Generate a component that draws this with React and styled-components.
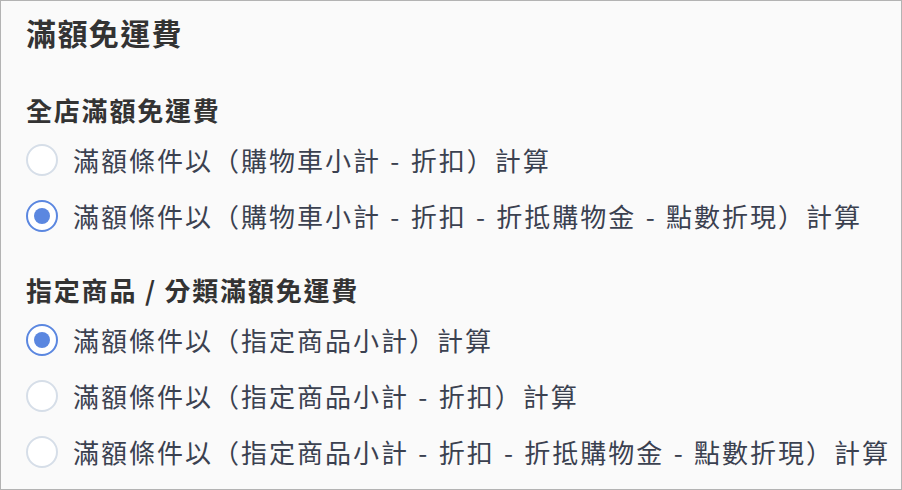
import React from "react";
import styled, { createGlobalStyle } from "styled-components";

const Global = createGlobalStyle`
  html, body { margin: 0; padding: 0; background: #fafafa; }
  * { box-sizing: border-box; }
`;

const Frame = styled.div`
  width: 902px;
  height: 490px;
  border: 1px solid #b3b3b3;
  background: #fafafa;
  padding: 11px 0 0 25px;
  font-family: "Noto Sans CJK TC", "Noto Sans", sans-serif;
  overflow: hidden;
`;

const Title = styled.h1`
  margin: 0;
  font-size: 30px;
  line-height: 40px;
  font-weight: 700;
  letter-spacing: 1.4px;
  color: #333333;
`;

const Section = styled.section`
  display: flex;
  flex-direction: column;
  margin-top: ${(p) => p.$gap}px;
`;

const SectionTitle = styled.h2`
  margin: 0 0 4px;
  font-size: 26px;
  line-height: 36px;
  font-weight: 700;
  letter-spacing: 1.8px;
  color: #333333;
`;

const Option = styled.label`
  display: flex;
  align-items: center;
  gap: 15px;
  height: 56px;
  cursor: pointer;
`;

const Radio = styled.span`
  flex: none;
  width: 32px;
  height: 32px;
  border-radius: 50%;
  border: 2.5px solid ${(p) => (p.$checked ? "#5b87e0" : "#d6dee8")};
  background: #ffffff;
  display: flex;
  align-items: center;
  justify-content: center;
  &::after {
    content: "";
    width: 16px;
    height: 16px;
    border-radius: 50%;
    background: #5b87e0;
    display: ${(p) => (p.$checked ? "block" : "none")};
  }
`;

const Label = styled.span`
  font-size: 26px;
  line-height: 36px;
  letter-spacing: 2px;
  word-spacing: 1.5px;
  color: #3b4150;
  white-space: nowrap;
`;

const sections = [
  {
    title: "全店滿額免運費",
    gap: 40,
    options: [
      { text: "滿額條件以（購物車小計 - 折扣）計算", checked: false },
      { text: "滿額條件以（購物車小計 - 折扣 - 折抵購物金 - 點數折現）計算", checked: true },
    ],
  },
  {
    title: "指定商品 / 分類滿額免運費",
    gap: 28,
    options: [
      { text: "滿額條件以（指定商品小計）計算", checked: true },
      { text: "滿額條件以（指定商品小計 - 折扣）計算", checked: false },
      { text: "滿額條件以（指定商品小計 - 折扣 - 折抵購物金 - 點數折現）計算", checked: false },
    ],
  },
];

export default function App() {
  return (
    <>
      <Global />
      <Frame>
        <Title>滿額免運費</Title>
        {sections.map((s) => (
          <Section key={s.title} $gap={s.gap}>
            <SectionTitle>{s.title}</SectionTitle>
            {s.options.map((o) => (
              <Option key={o.text}>
                <Radio $checked={o.checked} />
                <Label>{o.text}</Label>
              </Option>
            ))}
          </Section>
        ))}
      </Frame>
    </>
  );
}
